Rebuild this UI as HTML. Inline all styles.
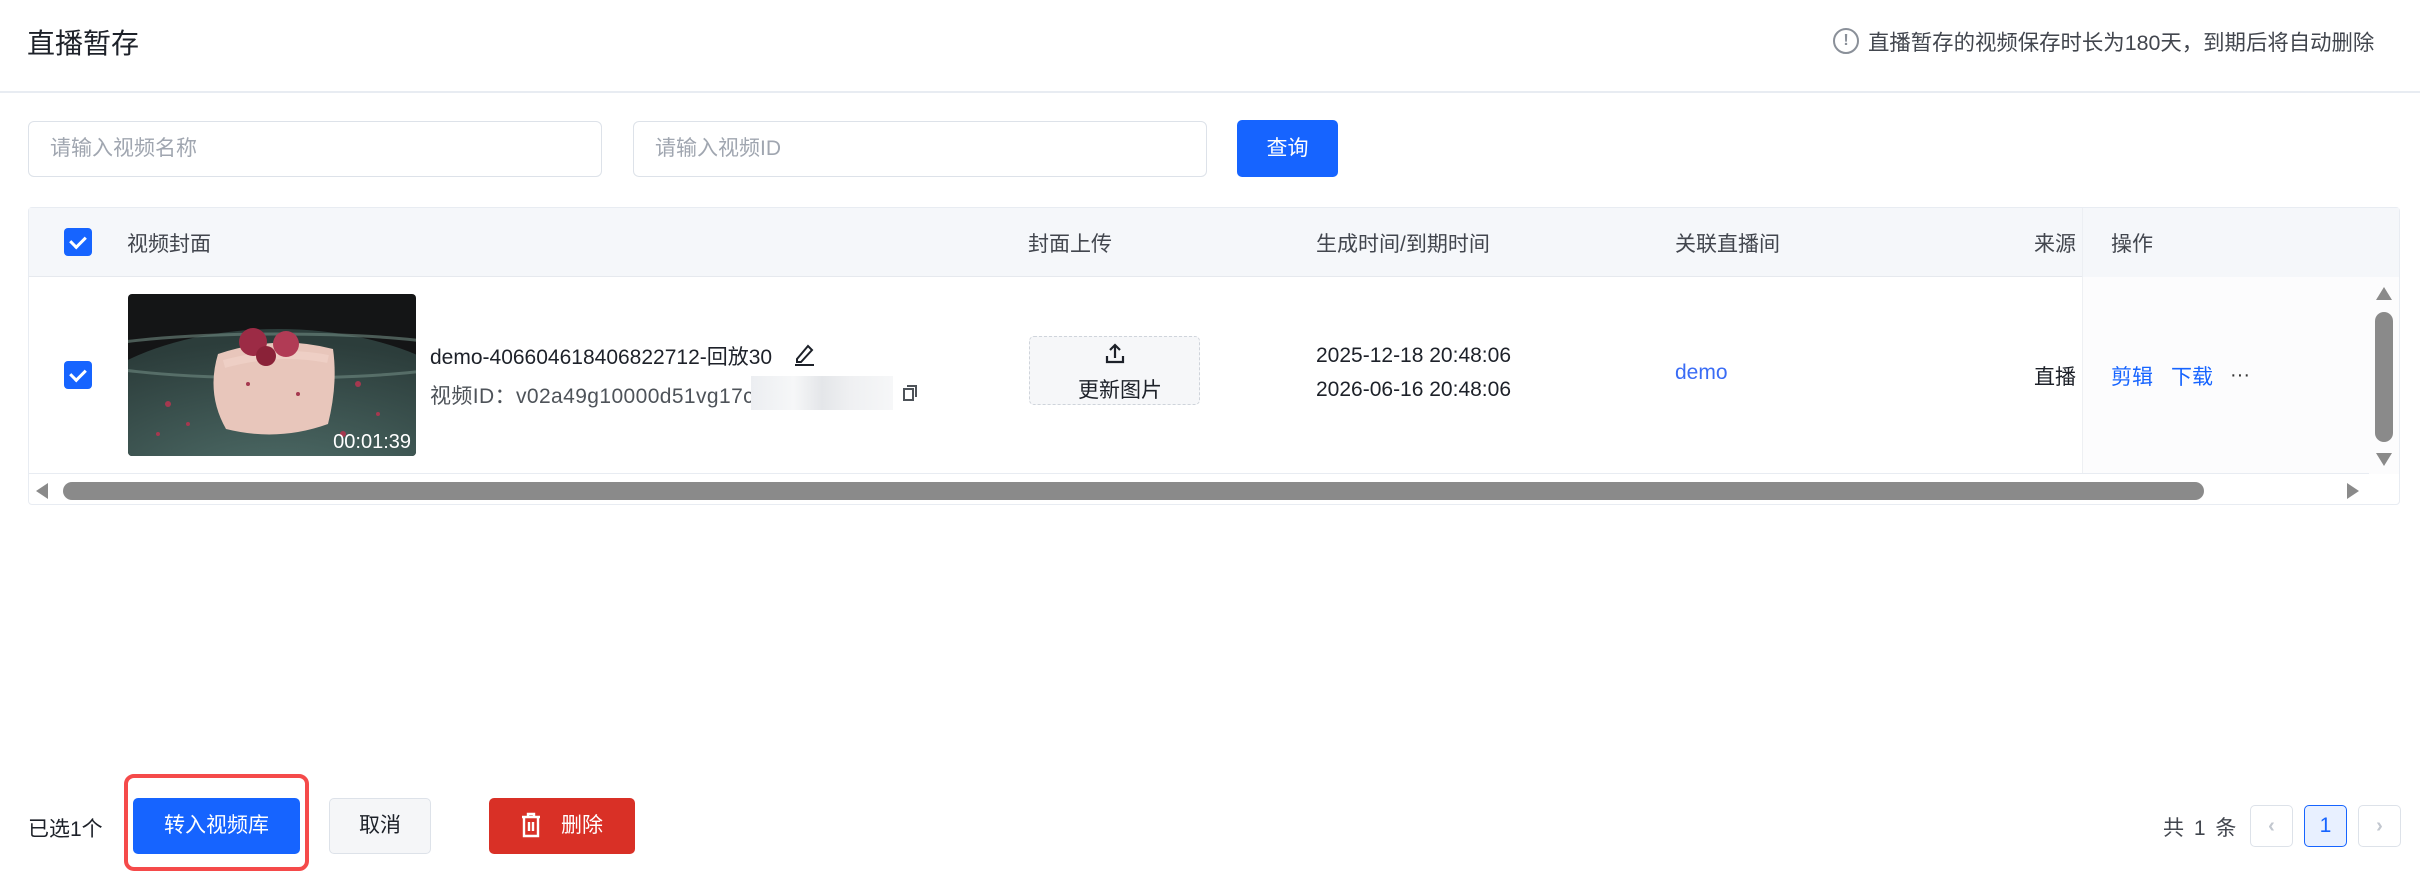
<!DOCTYPE html>
<html><head><meta charset="utf-8"><style>
*{box-sizing:border-box;margin:0;padding:0}
body{width:2420px;height:892px;background:#fff;font-family:"Liberation Sans","Noto Sans CJK SC",sans-serif;position:relative;overflow:hidden;color:#1d2129}
.a{position:absolute}
.cb{position:absolute;width:28px;height:28px;background:#1664ff;border-radius:4px}
.cb:after{content:"";position:absolute;left:9px;top:5px;width:7px;height:12px;border:solid #fff;border-width:0 3px 3px 0;transform:rotate(45deg)}
.inp{position:absolute;height:56px;border:1px solid #dde2e9;border-radius:6px;color:#a0a6b0;font-size:21px;line-height:54px;padding-left:21px}
.btn{position:absolute;border-radius:5px;font-size:21px;text-align:center}
.th{position:absolute;top:228px;font-size:21px;color:#42464e}
</style></head><body>
<div class="a" style="left:27px;top:22px;font-size:28px;color:#1d2129">直播暂存</div>
<div class="a" style="left:1833px;top:28px;width:26px;height:26px;border:2px solid #8a9099;border-radius:50%;font-size:16px;line-height:22px;text-align:center;color:#8a9099;font-weight:bold">!</div>
<div class="a" style="left:1868px;top:26px;font-size:21.4px;color:#42464e">直播暂存的视频保存时长为180天，到期后将自动删除</div>
<div class="a" style="left:0;top:91px;width:2420px;height:2px;background:#e8ecf2"></div>

<div class="inp" style="left:28px;top:121px;width:574px">请输入视频名称</div>
<div class="inp" style="left:633px;top:121px;width:574px">请输入视频ID</div>
<div class="btn" style="left:1237px;top:120px;width:101px;height:57px;background:#1664ff;color:#fff;line-height:57px">查询</div>

<div class="a" style="left:28px;top:207px;width:2372px;height:298px;border:1px solid #e8ecf2;border-radius:4px"></div>
<div class="a" style="left:29px;top:208px;width:2370px;height:69px;background:#f5f7fa;border-bottom:1px solid #e6e9ee"></div>
<div class="cb" style="left:64px;top:228px"></div>
<div class="th" style="left:127px">视频封面</div>
<div class="th" style="left:1028px">封面上传</div>
<div class="th" style="left:1316px">生成时间/到期时间</div>
<div class="th" style="left:1675px">关联直播间</div>
<div class="th" style="left:2034px">来源</div>
<div class="a" style="left:2082px;top:208px;width:317px;height:266px;background:#fcfcfd;border-left:1px solid #eef0f3"></div>
<div class="a" style="left:2082px;top:208px;width:317px;height:69px;background:#f5f7fa;border-left:1px solid #eceff3"></div>
<div class="th" style="left:2111px;color:#42464e">操作</div>

<div class="cb" style="left:64px;top:361px"></div>
<svg class="a" style="left:128px;top:294px" width="288" height="162" viewBox="0 0 288 162">
<defs><clipPath id="c"><rect width="288" height="162" rx="4"/></clipPath>
<radialGradient id="p" cx="0.5" cy="0.75" r="0.7"><stop offset="0" stop-color="#53736e"/><stop offset="1" stop-color="#2c3d3b"/></radialGradient></defs>
<g clip-path="url(#c)">
<rect width="288" height="162" fill="#141516"/>
<ellipse cx="150" cy="150" rx="220" ry="115" fill="url(#p)"/>
<ellipse cx="150" cy="62" rx="200" ry="22" fill="none" stroke="#6f8a82" stroke-width="3" opacity=".6"/>
<path d="M90 60 Q150 40 205 55 Q210 90 200 130 Q150 148 98 135 Q78 100 90 60Z" fill="#e8c6bb"/>
<path d="M96 70 Q150 55 200 65" stroke="#f2d6cc" stroke-width="8" fill="none" opacity=".6"/>
<circle cx="125" cy="48" r="14" fill="#9c2b45"/><circle cx="158" cy="50" r="13" fill="#b13b55"/><circle cx="138" cy="62" r="10" fill="#8a2238"/>
<g fill="#a5384f"><circle cx="40" cy="110" r="3"/><circle cx="60" cy="130" r="2"/><circle cx="230" cy="90" r="3"/><circle cx="250" cy="120" r="2"/><circle cx="30" cy="140" r="2"/><circle cx="215" cy="140" r="3"/><circle cx="120" cy="90" r="2"/><circle cx="170" cy="100" r="2"/></g>
<text x="283" y="154" text-anchor="end" font-family="Liberation Sans" font-size="20" fill="#fff">00:01:39</text>
</g></svg>
<div class="a" style="left:430px;top:341px;font-size:21px;color:#1d2129">demo-406604618406822712-回放30</div>
<svg class="a" style="left:792px;top:341px" width="26" height="26" viewBox="0 0 26 26"><path d="M5 18 L16 5 L20 9 L9 21 L5 21Z" fill="none" stroke="#1d2129" stroke-width="2"/><path d="M3 24H22" stroke="#1d2129" stroke-width="2"/></svg>
<div class="a" style="left:430px;top:380px;font-size:21px;color:#4e5359;letter-spacing:0.4px">视频ID：v02a49g10000d51vg17c</div>
<div class="a" style="left:751px;top:376px;width:142px;height:34px;background:linear-gradient(90deg,#eceef1,#f6f7f8 30%,#e4e6e9 50%,#eff0f2 70%,#f6f7f8)"></div>
<svg class="a" style="left:902px;top:384px" width="16" height="18" viewBox="0 0 16 18"><rect x="2" y="5" width="9" height="11" fill="none" stroke="#4e5359" stroke-width="2"/><path d="M5 2H14V13" fill="none" stroke="#4e5359" stroke-width="2"/></svg>
<div class="a" style="left:1029px;top:336px;width:171px;height:69px;border:1px dashed #cfd4db;border-radius:5px;background:#f6f7f9"></div>
<svg class="a" style="left:1104px;top:342px" width="22" height="24" viewBox="0 0 22 24"><path d="M11 16V3M6 8L11 3L16 8M3 14V20H19V14" fill="none" stroke="#1d2129" stroke-width="2.2"/></svg>
<div class="a" style="left:1078px;top:374px;font-size:21px;color:#1d2129">更新图片</div>
<div class="a" style="left:1316px;top:344px;font-size:21px">2025-12-18 20:48:06</div>
<div class="a" style="left:1316px;top:378px;font-size:21px">2026-06-16 20:48:06</div>
<div class="a" style="left:1675px;top:361px;font-size:21px;color:#3a6cf5">demo</div>
<div class="a" style="left:2034px;top:361px;width:48px;overflow:hidden;font-size:21px;white-space:nowrap">直播</div>
<div class="a" style="left:2111px;top:361px;font-size:21px;color:#1664ff">剪辑</div>
<div class="a" style="left:2171px;top:361px;font-size:21px;color:#1664ff">下载</div>
<div class="a" style="left:2230px;top:364px;font-size:20px;color:#333">···</div>
<div class="a" style="left:29px;top:473px;width:2340px;height:1px;background:#e8ecf2"></div>
<div class="a" style="left:2375px;top:312px;width:18px;height:130px;background:#8a8a8a;border-radius:9px"></div>
<div class="a" style="left:2376px;top:287px;width:0;height:0;border-left:8px solid transparent;border-right:8px solid transparent;border-bottom:13px solid #8a8a8a"></div>
<div class="a" style="left:2376px;top:453px;width:0;height:0;border-left:8px solid transparent;border-right:8px solid transparent;border-top:13px solid #8a8a8a"></div>
<div class="a" style="left:63px;top:482px;width:2141px;height:18px;background:#8a8a8a;border-radius:9px"></div>
<div class="a" style="left:36px;top:483px;width:0;height:0;border-top:8px solid transparent;border-bottom:8px solid transparent;border-right:12px solid #8a8a8a"></div>
<div class="a" style="left:2347px;top:483px;width:0;height:0;border-top:8px solid transparent;border-bottom:8px solid transparent;border-left:12px solid #8a8a8a"></div>

<div class="a" style="left:28px;top:813px;font-size:21px;color:#1d2129">已选1个</div>
<div class="a" style="left:124px;top:774px;width:185px;height:97px;border:4px solid #f54a4a;border-radius:10px"></div>
<div class="btn" style="left:133px;top:798px;width:167px;height:56px;background:#1664ff;color:#fff;line-height:56px">转入视频库</div>
<div class="btn" style="left:329px;top:798px;width:102px;height:56px;background:#f5f6f8;border:1px solid #dde2e9;line-height:54px;color:#1d2129">取消</div>
<div class="btn" style="left:489px;top:798px;width:146px;height:56px;background:#d93026;color:#fff;line-height:56px;padding-left:40px">删除</div>
<svg class="a" style="left:520px;top:812px" width="22" height="26" viewBox="0 0 22 26"><path d="M2 5H20M8 5V2H14V5M4 6V24H18V6M9 10V19M13 10V19" fill="none" stroke="#fff" stroke-width="2.4"/></svg>
<div class="a" style="left:2163px;top:812px;font-size:21px;color:#42464e;letter-spacing:2px">共 1 条</div>
<div class="a" style="left:2250px;top:805px;width:43px;height:42px;border:1px solid #dde2e9;border-radius:5px;color:#c2c7cf;text-align:center;line-height:40px;font-size:20px;font-weight:bold">‹</div>
<div class="a" style="left:2304px;top:805px;width:43px;height:42px;border:1px solid #1664ff;border-radius:5px;background:#e8f0ff;color:#1664ff;text-align:center;line-height:40px;font-size:21px">1</div>
<div class="a" style="left:2358px;top:805px;width:43px;height:42px;border:1px solid #dde2e9;border-radius:5px;color:#c2c7cf;text-align:center;line-height:40px;font-size:20px;font-weight:bold">›</div>
</body></html>
